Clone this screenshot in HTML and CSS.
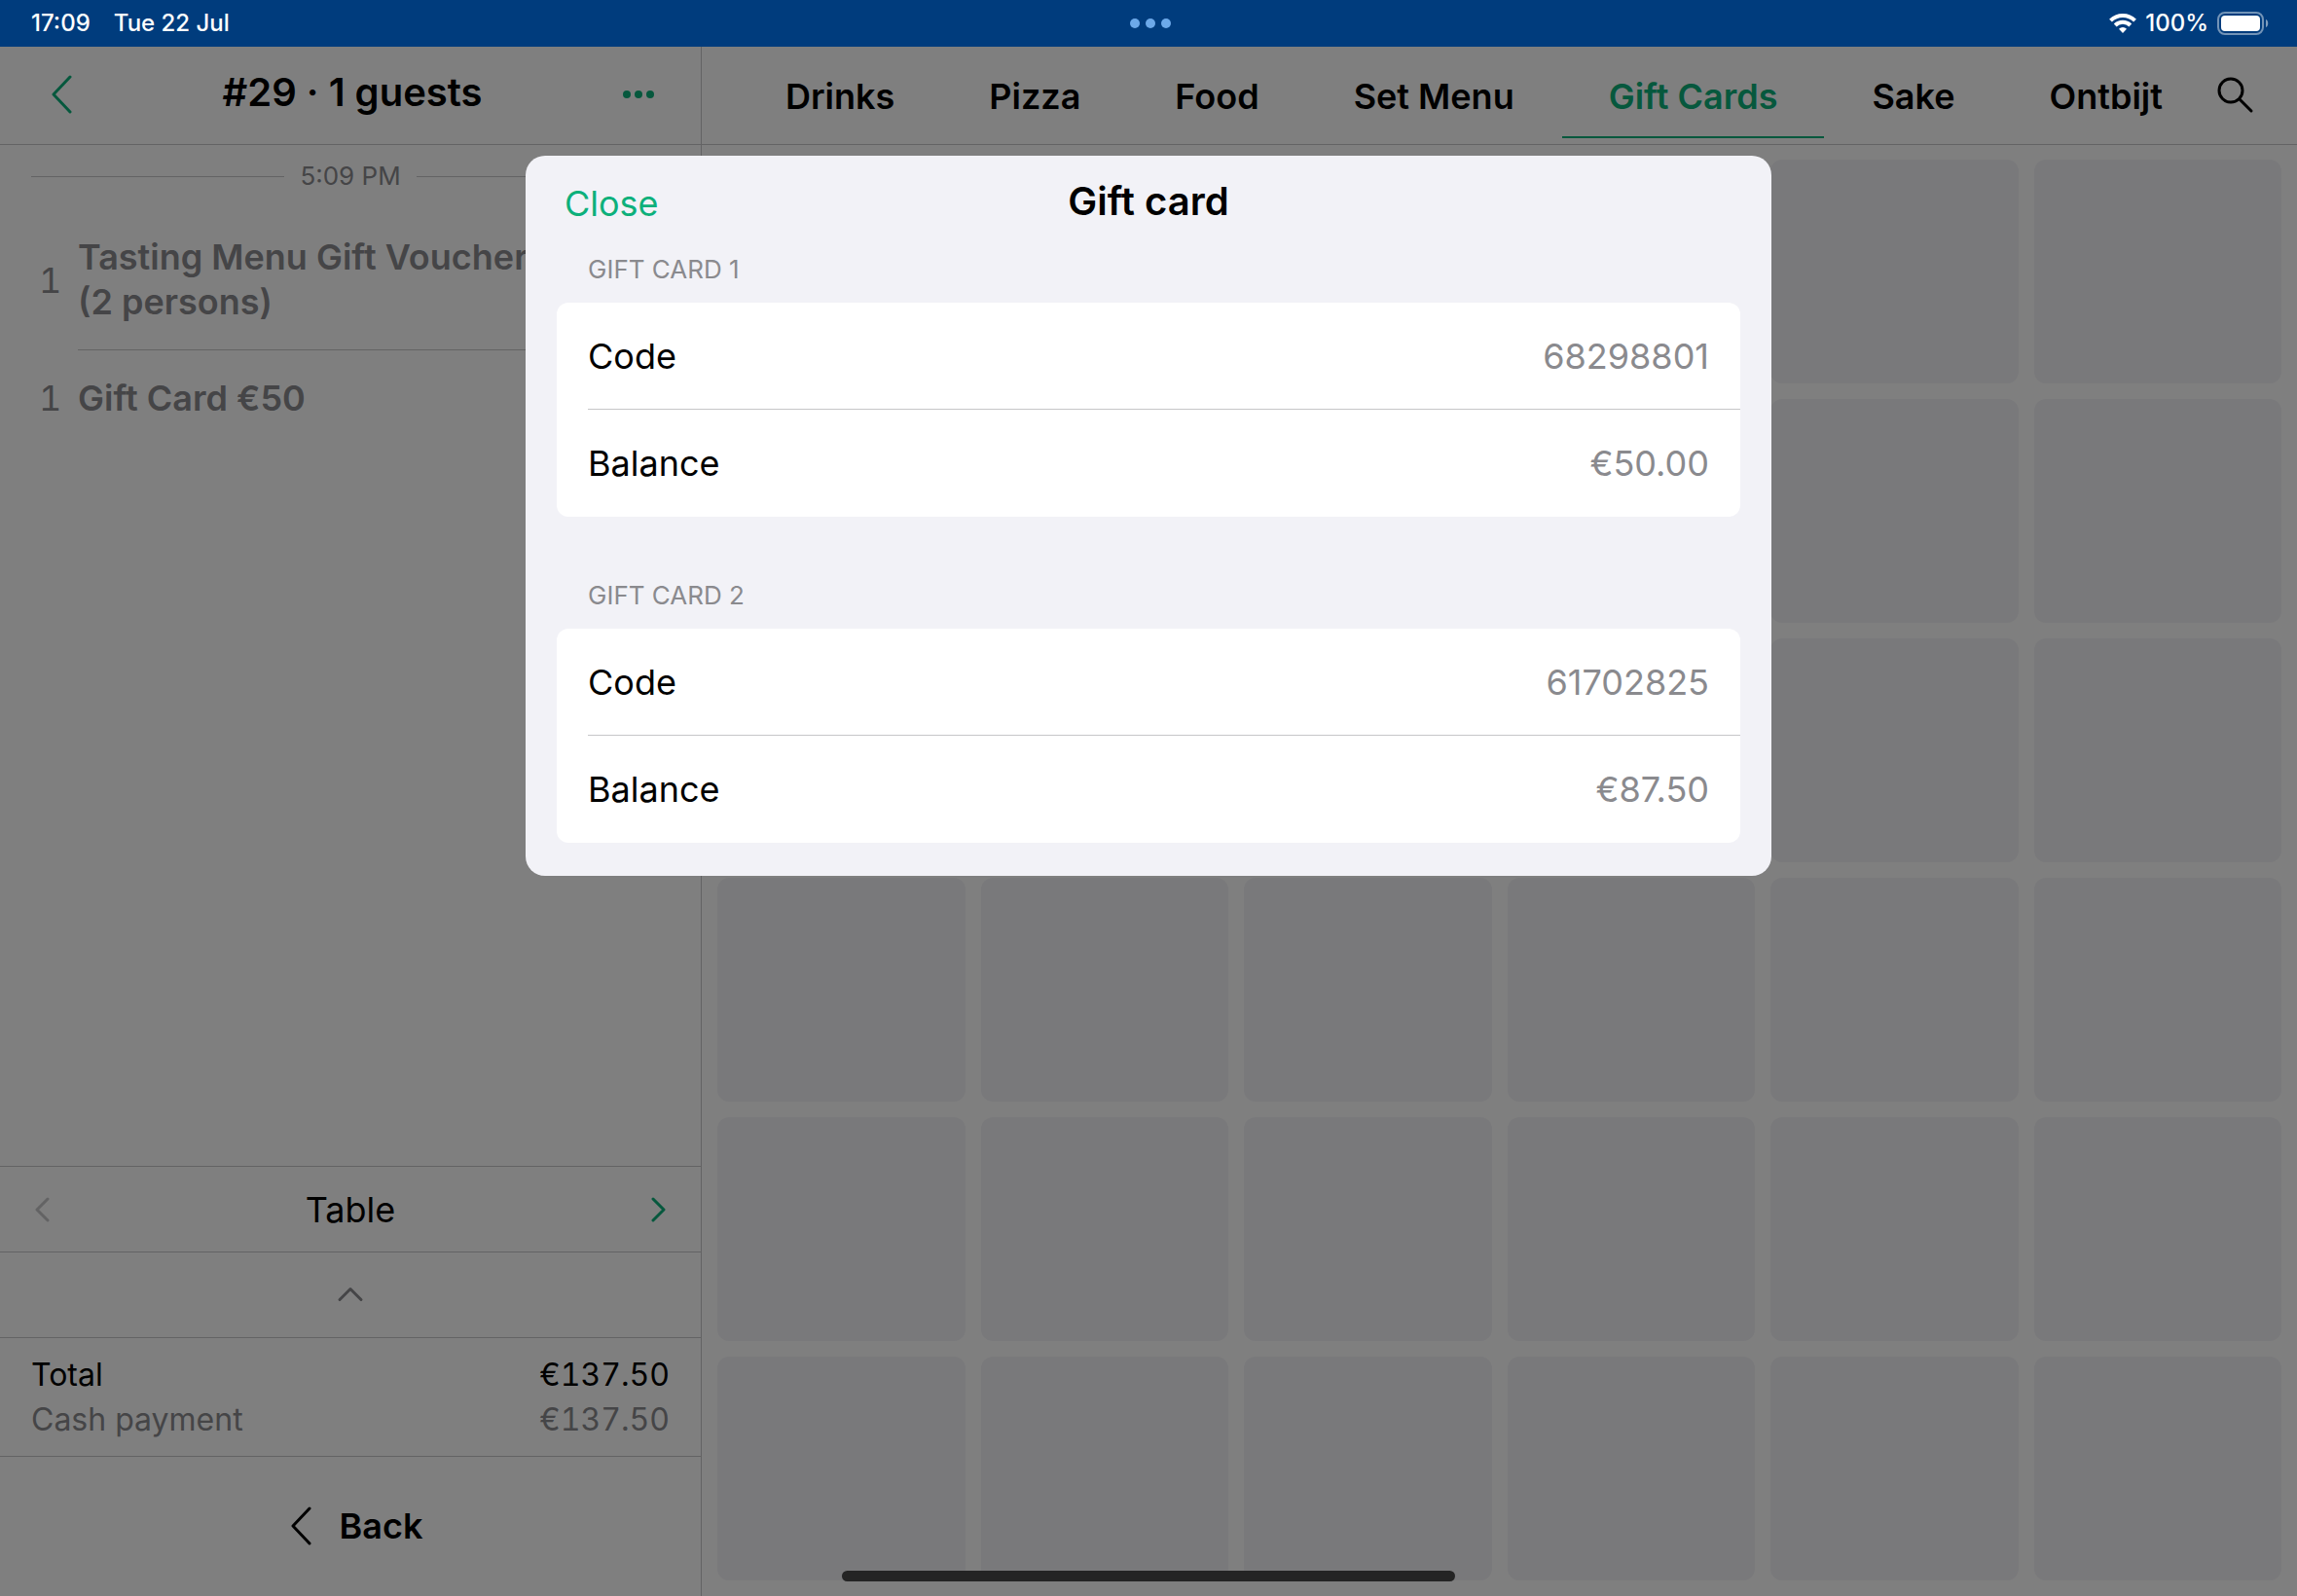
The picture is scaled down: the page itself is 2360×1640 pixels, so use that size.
FILE: index.html
```html
<!DOCTYPE html>
<html lang="en">
<head>
<meta charset="utf-8">
<meta name="viewport" content="width=device-width, initial-scale=1">
<title>Gift card</title>
<link rel="stylesheet" href="styles.css">
</head>
<body>
<div class="screen">
  <div class="status-bar">
    <div class="status-left"><span>17:09</span><span>Tue 22 Jul</span></div>
    <div class="status-dots"><i></i><i></i><i></i></div>
    <div class="status-right">
      <svg class="wifi" width="28" height="20" viewBox="0 0 28 20" fill="none" stroke="#fff" stroke-width="4">
        <path d="M1.5 7.2a17.8 17.8 0 0 1 25 0"/>
        <path d="M6.2 12a11.2 11.2 0 0 1 15.6 0"/>
        <path d="M14 20l-4-4.3a5.8 5.8 0 0 1 8 0z" fill="#fff" stroke="none"/>
      </svg>
      <span>100%</span>
      <svg class="battery" width="54" height="24" viewBox="0 0 54 24">
        <rect x="1" y="1" width="46" height="22" rx="7" fill="none" stroke="#fff" stroke-opacity=".45" stroke-width="2"/>
        <rect x="4" y="4" width="40" height="16" rx="4" fill="#fff"/>
        <path d="M50 8c3 1 3 7 0 8z" fill="#fff" fill-opacity=".5"/>
      </svg>
    </div>
  </div>

  <div class="app">
    <aside class="order">
      <header class="order-head">
        <button class="icon-btn accent" type="button" aria-label="Back to tables">
          <svg width="22" height="40" viewBox="0 0 22 40"><path d="M20 2 3 20l17 18"/></svg>
        </button>
        <h1>#29 · 1 guests</h1>
        <button class="icon-btn more" type="button" aria-label="More"><i></i><i></i><i></i></button>
      </header>
      <div class="order-time"><span>5:09 PM</span></div>
      <ul class="order-items">
        <li><span class="qty">1</span><span class="item-name">Tasting Menu Gift Voucher (2 persons)</span></li>
        <li><span class="qty">1</span><span class="item-name">Gift Card €50</span></li>
      </ul>
      <div class="pager">
        <button class="icon-btn disabled" type="button" aria-label="Previous" disabled>
          <svg width="16" height="26" viewBox="0 0 16 26"><path d="M14 2 3 13l11 11"/></svg>
        </button>
        <span>Table</span>
        <button class="icon-btn accent" type="button" aria-label="Next">
          <svg width="16" height="26" viewBox="0 0 16 26"><path d="M2 2l11 11L2 24"/></svg>
        </button>
      </div>
      <button class="expand" type="button" aria-label="Show details">
        <svg width="28" height="16" viewBox="0 0 28 16"><path d="M3 13.500 14 2.500l11 11"/></svg>
      </button>
      <dl class="totals">
        <div><dt>Total</dt><dd>€137.50</dd></div>
        <div class="payment"><dt>Cash payment</dt><dd>€137.50</dd></div>
      </dl>
      <button class="back" type="button">
        <svg width="48" height="40" viewBox="0 0 48 40"><path d="M32 2 15 20l17 18"/></svg>
        Back
      </button>
    </aside>

    <main class="menu">
      <nav class="tabs">
        <a href="#drinks">Drinks</a>
        <a href="#pizza">Pizza</a>
        <a href="#food">Food</a>
        <a href="#set-menu">Set Menu</a>
        <a href="#gift-cards" class="active">Gift Cards</a>
        <a href="#sake">Sake</a>
        <a href="#ontbijt">Ontbijt</a>
        <button class="search" type="button" aria-label="Search">
          <svg width="40" height="40" viewBox="0 0 40 40"><circle cx="16" cy="16" r="12"/><path d="M25 25l12 12"/></svg>
        </button>
      </nav>
      <div class="tiles">
        <div></div><div></div><div></div><div></div><div></div><div></div>
        <div></div><div></div><div></div><div></div><div></div><div></div>
        <div></div><div></div><div></div><div></div><div></div><div></div>
        <div></div><div></div><div></div><div></div><div></div><div></div>
        <div></div><div></div><div></div><div></div><div></div><div></div>
        <div></div><div></div><div></div><div></div><div></div><div></div>
      </div>
    </main>

    <div class="overlay">
      <section class="dialog" role="dialog" aria-modal="true" aria-labelledby="dialog-title">
        <header class="dialog-head">
          <button class="close" type="button">Close</button>
          <h2 id="dialog-title">Gift card</h2>
        </header>
        <section class="group">
          <h3>GIFT CARD 1</h3>
          <dl class="card">
            <div><dt>Code</dt><dd>68298801</dd></div>
            <div><dt>Balance</dt><dd>€50.00</dd></div>
          </dl>
        </section>
        <section class="group">
          <h3>GIFT CARD 2</h3>
          <dl class="card">
            <div><dt>Code</dt><dd>61702825</dd></div>
            <div><dt>Balance</dt><dd>€87.50</dd></div>
          </dl>
        </section>
      </section>
    </div>
  </div>
  <div class="home-indicator"></div>
</div>
</body>
</html>
```
FILE: styles.css
```css
:root {
  --accent: #0db07b;
  --line: #c6c6c8;
  --gray: #8a8a8e;
  --surface: #f2f2f7;
}

* { box-sizing: border-box; }

body, h1, h2, h3, ul, dl, dd { margin: 0; padding: 0; }

body {
  font-family: Inter, "Liberation Sans", sans-serif;
  font-size: 36px;
  line-height: 46px;
  color: #000;
  background: #fff;
}

button {
  font: inherit;
  color: inherit;
  background: none;
  border: 0;
  padding: 0;
}

a { color: inherit; text-decoration: none; }

svg { display: block; flex: none; }

h1, h2 { font-size: 40px; font-weight: 600; }

.screen {
  position: relative;
  display: flex;
  flex-direction: column;
  min-height: 100vh;
}

/* Status bar */
.status-bar {
  display: grid;
  grid-template-columns: 1fr auto 1fr;
  align-items: center;
  height: 48px;
  padding: 0 28px 0 32px;
  font-size: 24px;
  font-weight: 500;
  color: #fff;
  background: #003c7d;
}

.status-left { display: flex; gap: 24px; }
.status-dots { display: flex; gap: 6px; }
.status-dots i { width: 10px; height: 10px; border-radius: 50%; background: #6ca9e9; }
.status-right { display: flex; align-items: center; justify-content: flex-end; gap: 9px; }

.app {
  position: relative;
  flex: 1;
  display: grid;
  grid-template-columns: 721px 1fr;
}

/* Order column */
.order {
  display: flex;
  flex-direction: column;
  border-right: 1px solid var(--line);
}

.order svg, .search svg {
  fill: none;
  stroke: currentColor;
  stroke-width: 3;
  stroke-linecap: round;
  stroke-linejoin: round;
}

.order-head {
  display: grid;
  grid-template-columns: 1fr auto 1fr;
  align-items: center;
  height: 101px;
  padding: 0 48px 2px 52px;
  border-bottom: 1px solid var(--line);
}

.order-head h1 { padding-bottom: 4px; }

.icon-btn { display: flex; }
.accent { color: var(--accent); }
.disabled { color: var(--line); }
.more { justify-self: end; gap: 4px; }
.more i { width: 8px; height: 8px; border-radius: 50%; background: var(--accent); }

.order-time {
  display: flex;
  align-items: center;
  gap: 16px;
  height: 66px;
  padding: 0 32px 2px;
  font-size: 26px;
  color: var(--gray);
}

.order-time::before, .order-time::after {
  content: "";
  flex: 1;
  height: 1px;
  background: var(--line);
}

.order-items {
  flex: 1;
  list-style: none;
  color: var(--gray);
}

.order-items li { display: flex; align-items: center; padding-left: 40px; }
.order-items .qty { width: 40px; font-variant-numeric: tabular-nums; }
.order-items .item-name { flex: 1; padding: 26px 150px 26px 0; font-weight: 600; }
.order-items li:first-child .item-name { border-bottom: 1px solid var(--line); }

.pager {
  display: flex;
  align-items: center;
  justify-content: space-between;
  height: 88px;
  padding: 0 35px;
  border-top: 1px solid var(--line);
}

.expand {
  display: flex;
  align-items: center;
  justify-content: center;
  height: 88px;
  padding-bottom: 2px;
  color: var(--gray);
  border-top: 1px solid var(--line);
}

.totals {
  padding: 15px 32px 14px;
  font-size: 32px;
  border-top: 1px solid var(--line);
}

.totals div { display: flex; justify-content: space-between; }
.totals dd { font-variant-numeric: tabular-nums; }
.totals .payment { color: var(--gray); }

.back {
  display: flex;
  align-items: center;
  justify-content: center;
  gap: 15px;
  height: 144px;
  padding-bottom: 2px;
  font-weight: 600;
  border-top: 1px solid var(--line);
}

/* Menu column */
.menu { display: flex; flex-direction: column; min-width: 0; }

.tabs {
  display: flex;
  align-items: flex-start;
  justify-content: flex-end;
  gap: 1px;
  height: 101px;
  padding-right: 44px;
  font-weight: 600;
  border-bottom: 1px solid var(--line);
}

.tabs a { padding: 28px 48px 18px; border-bottom: 2px solid transparent; white-space: nowrap; }
.tabs .active { color: var(--accent); border-color: var(--accent); }
.search { padding: 29px 0 0 5px; }

.tiles {
  flex: 1;
  display: grid;
  grid-template-columns: repeat(6, 1fr);
  grid-auto-rows: 1fr;
  gap: 16px;
  padding: 15px 16px 16px;
}

.tiles div { border-radius: 12px; background: var(--surface); }

/* Dialog */
.overlay {
  position: absolute;
  inset: 0;
  display: flex;
  align-items: flex-start;
  justify-content: center;
  padding-top: 112px;
  background: rgba(0, 0, 0, 0.5);
}

.dialog {
  width: 1280px;
  max-width: 100%;
  padding: 0 32px 34px;
  border-radius: 20px;
  background: var(--surface);
}

.dialog-head {
  display: grid;
  grid-template-columns: 1fr auto 1fr;
  align-items: center;
  height: 94px;
  padding: 0 8px;
}

.close { justify-self: start; padding-top: 4px; color: var(--accent); }

.group + .group { padding-top: 58px; }
.group h3 { padding: 0 32px 11px; font-size: 26px; font-weight: 400; color: var(--gray); }

.card { border-radius: 12px; background: #fff; }
.card div {
  display: flex;
  align-items: center;
  justify-content: space-between;
  height: 110px;
  margin-left: 32px;
  padding-right: 32px;
}
.card div:first-child { border-bottom: 1px solid var(--line); }
.card dd { color: var(--gray); }

.home-indicator {
  position: absolute;
  bottom: 15px;
  left: 50%;
  width: 630px;
  height: 11px;
  margin-left: -315px;
  border-radius: 6px;
  background: #242424;
}
```
